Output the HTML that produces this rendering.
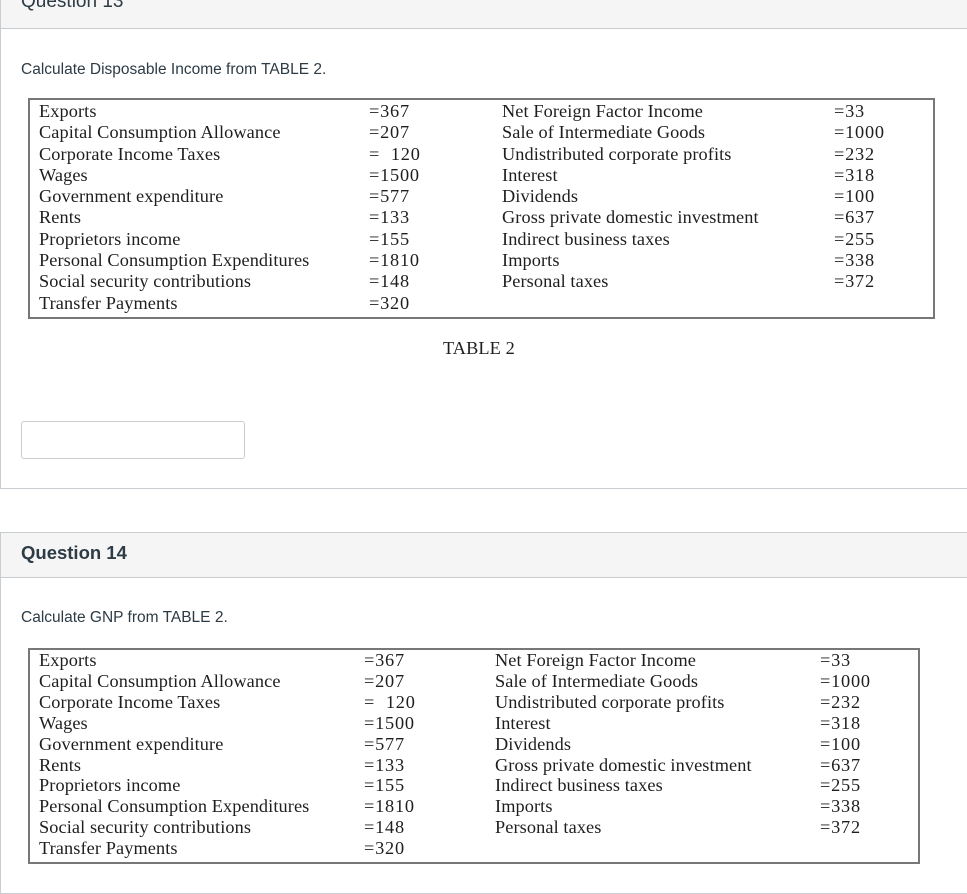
<!DOCTYPE html>
<html><head><meta charset="utf-8"><style>
body{margin:0;width:967px;height:881px;overflow:hidden;background:#fff;position:relative;font-family:"Liberation Sans",sans-serif;}
.a{position:absolute;}
.hdr{background:#f5f5f5;border-bottom:1px solid #c7cdd1;}
.q{font-size:18.5px;color:#2d3b45;font-weight:bold;}
.p{font-size:15.5px;color:#2d3b45;}
.t{position:absolute;border:2px solid #777;}
.r{position:absolute;font-family:"Liberation Serif",serif;font-size:18.3px;color:#1e1e1e;white-space:nowrap;letter-spacing:0.1px;line-height:21.3px;}
.n{letter-spacing:0.8px;}
</style></head><body>
<div class="a" style="left:0;top:-2px;width:966px;height:490px;border:1px solid #c7cdd1;border-top:none;"></div>
<div class="a hdr" style="left:1px;top:0;width:966px;height:28px;"></div>
<div class="a q" style="left:21px;top:-9px;font-weight:normal;font-size:19px">Question 13</div>
<div class="a p" style="left:21px;top:61px">Calculate Disposable Income from TABLE 2.</div>
<div class="t" style="left:28px;top:98px;width:903px;height:217px"></div>
<div class="r" style="left:39px;top:101px">Exports<br>Capital Consumption Allowance<br>Corporate Income Taxes<br>Wages<br>Government expenditure<br>Rents<br>Proprietors income<br>Personal Consumption Expenditures<br>Social security contributions<br>Transfer Payments</div>
<div class="r n" style="left:369px;top:101px">=367<br>=207<br>= &nbsp;120<br>=1500<br>=577<br>=133<br>=155<br>=1810<br>=148<br>=320</div>
<div class="r" style="left:502px;top:101px">Net Foreign Factor Income<br>Sale of Intermediate Goods<br>Undistributed corporate profits<br>Interest<br>Dividends<br>Gross private domestic investment<br>Indirect business taxes<br>Imports<br>Personal taxes</div>
<div class="r n" style="left:834px;top:101px">=33<br>=1000<br>=232<br>=318<br>=100<br>=637<br>=255<br>=338<br>=372</div>
<div class="r" style="left:443px;top:338px">TABLE 2</div>
<div class="a" style="left:21px;top:421px;width:222px;height:36px;border:1px solid #c7cdd1;border-radius:3px"></div>
<div class="a" style="left:0;top:532px;width:966px;height:360px;border:1px solid #c7cdd1;"></div>
<div class="a hdr" style="left:1px;top:533px;width:966px;height:44px;"></div>
<div class="a q" style="left:21px;top:542px">Question 14</div>
<div class="a p" style="left:21px;top:609px">Calculate GNP from TABLE 2.</div>
<div class="t" style="left:28px;top:648px;width:888px;height:212px"></div>
<div class="r" style="left:39px;top:650px;line-height:20.9px">Exports<br>Capital Consumption Allowance<br>Corporate Income Taxes<br>Wages<br>Government expenditure<br>Rents<br>Proprietors income<br>Personal Consumption Expenditures<br>Social security contributions<br>Transfer Payments</div>
<div class="r n" style="left:364px;top:650px;line-height:20.9px">=367<br>=207<br>= &nbsp;120<br>=1500<br>=577<br>=133<br>=155<br>=1810<br>=148<br>=320</div>
<div class="r" style="left:495px;top:650px;line-height:20.9px">Net Foreign Factor Income<br>Sale of Intermediate Goods<br>Undistributed corporate profits<br>Interest<br>Dividends<br>Gross private domestic investment<br>Indirect business taxes<br>Imports<br>Personal taxes</div>
<div class="r n" style="left:820px;top:650px;line-height:20.9px">=33<br>=1000<br>=232<br>=318<br>=100<br>=637<br>=255<br>=338<br>=372</div>
</body></html>
